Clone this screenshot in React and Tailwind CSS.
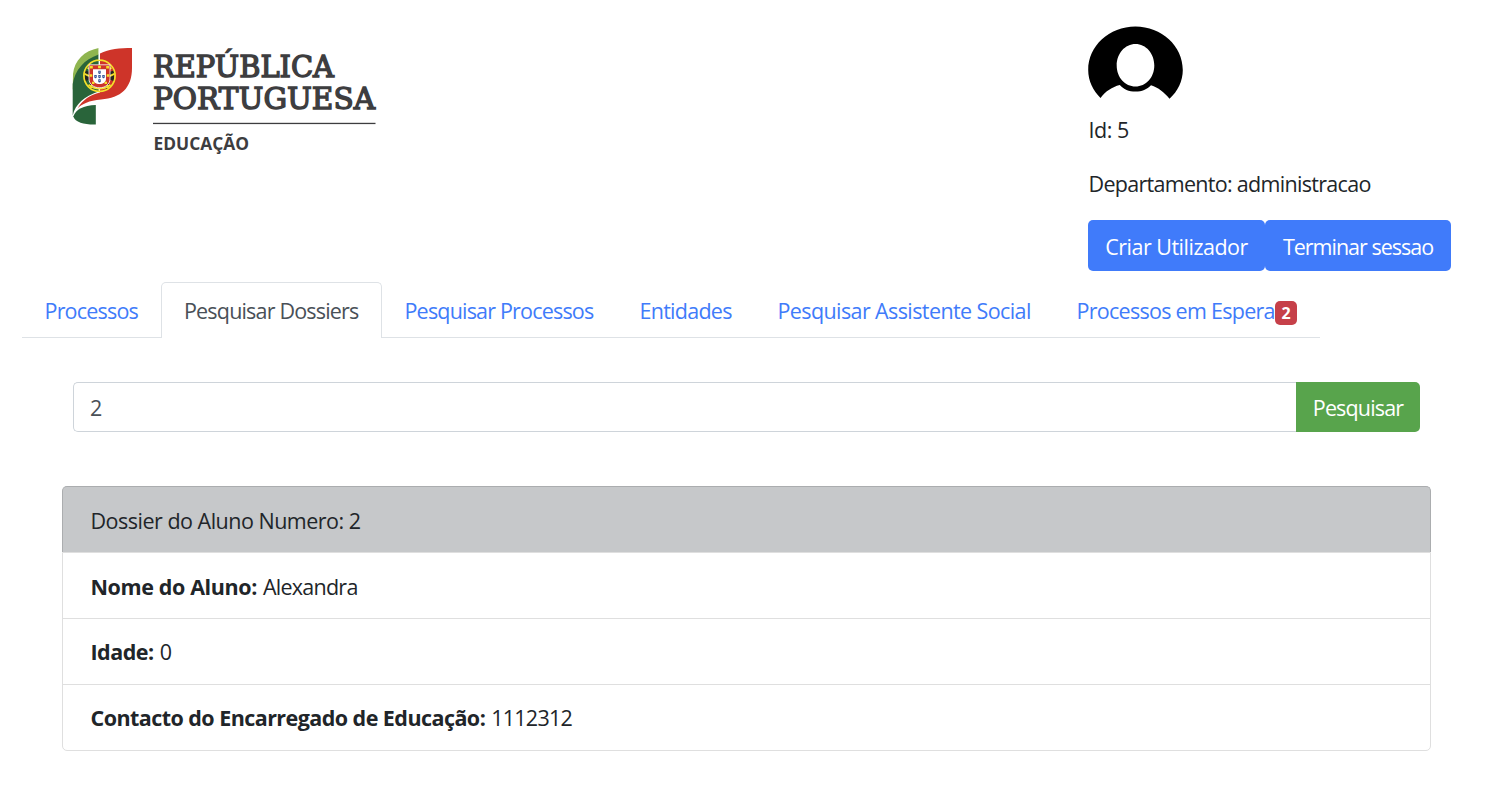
const tabs = [
  { label: 'Processos', box: 'w-[139px]', track: 'tracking-[-0.8px]' },
  { label: 'Pesquisar Dossiers', box: 'w-[221px]', track: 'tracking-[-0.82px]', active: true },
  { label: 'Pesquisar Processos', box: 'w-[235px]', track: 'tracking-[-0.81px]' },
  { label: 'Entidades', box: 'w-[138px]', track: 'tracking-[-0.73px]' },
  { label: 'Pesquisar Assistente Social', box: 'w-[299px]', track: 'tracking-[-0.6px]' },
  { label: 'Processos em Espera', box: 'w-[266px]', track: 'tracking-[-0.72px]', badge: 2 },
];

const rows = [
  { label: 'Nome do Aluno:', value: 'Alexandra', track: 'tracking-[-0.38px]', box: 'h-[66px] pt-[2px]' },
  { label: 'Idade:', value: '0', track: 'tracking-[-0.5px]', box: 'h-[66px]' },
  { label: 'Contacto do Encarregado de Educação:', value: '1112312', track: 'tracking-[-0.55px]', box: 'h-[65px] pt-[1px]' },
];

function Shield({ x, y }) {
  return (
    <g transform={`translate(${x} ${y})`}>
      <path d="M-1.2-1.6h2.4v2a1.2 1.2 0 0 1-2.4 0z" fill="#2d4f96" />
      <circle cy="-.3" r=".45" fill="#fff" />
    </g>
  );
}

function Logo() {
  return (
    <svg width="320" height="120" viewBox="60 40 320 120" role="img" aria-label="República Portuguesa">
      <path d="M98.600 48C84 51 74.500 60 73 74l-.3 16C76 73 84 61 98.600 55z" fill="#8fb550" />
      <path d="M98.600 54.500C84 59.500 75 70 72.700 84v31.500C75.500 104 84 96.500 98.600 91.500z" fill="#29643a" />
      <path d="M100 53.500c9-4.500 20-5.500 32-5.500v20c0 20-11 30-31 31.500-12 1-19 4.500-23.500 9 5.500-9 12.500-13.500 22.500-16z" fill="#ce3429" />
      <path d="M95.800 105v19.500c-11 .3-20.500-2-22.500-8 2.500-7 10-11.200 22.500-11.500z" fill="#29643a" />
      <g transform="translate(99.500 75.800)">
        <path d="M-14.500-5.500l5 2v7l-5 2zM14.500-5.500l-5 2v7l5 2zM-11 10l4-4 4 3-4 4.500zM11 10L7 6 3 9l4 4.500z" fill="#24251f" />
        <circle r="15.600" fill="none" stroke="#f4df2b" strokeWidth="1.700" />
        <path d="M-15-2c8 5 22 5 30 0M-12-8c7 4 17 12 21 20M12-8C5-4-5 4-9 12M-11 9C-5 14 5 14 11 9" fill="none" stroke="#f4df2b" strokeWidth="1.800" />
        <path d="M-10.500-11h21V3C10.500 9 5 12 0 12S-10.500 9-10.500 3z" fill="#ce3429" stroke="#fff" strokeWidth=".8" />
        <path d="M-6.500-6.500h13V3C6.500 6.500 3.500 8.300 0 8.300S-6.500 6.500-6.500 3z" fill="#fff" />
        <Shield x={0} y={-3.500} />
        <Shield x={-4} y={0.8} />
        <Shield x={0} y={0.8} />
        <Shield x={4} y={0.8} />
        <Shield x={0} y={5} />
        <path d="M-9.500-9.800h2.800v2.500h-2.800zM-1.400-10h2.800v2.500h-2.800zM6.700-9.800h2.800v2.500H6.700zM-9.800-1.500h2.600V1h-2.600zM7.200-1.500h2.600V1H7.200zM-7.500 6h2.400v2.300h-2.400zM5.100 6h2.400v2.300H5.100z" fill="#f4df2b" />
      </g>
      <path d="M99.300 47v13" stroke="#fff" strokeWidth="1.200" />
      <g fill="#3d3d3f">
        <g fontFamily="'DejaVu Serif', serif" fontSize="29.500" stroke="#3d3d3f" strokeWidth="1.400">
          <text x="153" y="77" textLength="181" lengthAdjust="spacingAndGlyphs">REPÚBLICA</text>
          <text x="153" y="108.500" textLength="222" lengthAdjust="spacingAndGlyphs">PORTUGUESA</text>
        </g>
        <rect x="153" y="122.800" width="222.500" height="1.300" />
        <text x="153.500" y="150" fontFamily="'Open Sans', sans-serif" fontWeight="700" fontSize="17" textLength="95.500" lengthAdjust="spacingAndGlyphs">EDUCAÇÃO</text>
      </g>
    </svg>
  );
}

function Avatar() {
  return (
    <svg width="96" height="76" viewBox="1088 26 96 76" className="block" aria-hidden="true">
      <path
        fillRule="evenodd"
        d="M1100.500 98C1093 90.500 1088.200 81 1088.200 70c0-24 21-43.500 47.200-43.500S1182.800 46 1182.800 70c0 11-5 21.500-13.300 28.700-5.500-6.700-11-11-18.500-13.500-4 4.200-9 6.300-15.500 6.300s-12-2.300-15.700-6.600c-7.800 2-14 6-19.300 13.100zM1135.500 44c-10.500 0-18.800 9.500-18.800 21.500s8.300 21 18.800 21 18.800-9 18.800-21-8.300-21.500-18.800-21.500z"
      />
    </svg>
  );
}

export default function App() {
  return (
    <div className="h-[797px] w-[1498px] overflow-hidden bg-white font-['Open_Sans','Noto_Sans',sans-serif] text-[21.5px] leading-[34px] text-[#212529]">
      <header className="flex h-[282px] items-start justify-between pl-[60px] pr-[47px]">
        <div className="pt-10">
          <Logo />
        </div>
        <div className="w-[363px] pt-[26px]">
          <Avatar />
          <p className="mt-[11px] pl-[0.5px] tracking-[-0.5px]">Id: 5</p>
          <p className="mt-5 pl-[0.5px] tracking-[-0.7px]">Departamento: administracao</p>
          <div className="mt-[19px] flex text-white">
            <button className="h-[51px] w-[177px] whitespace-nowrap rounded-[5px] bg-[#407bfa] pt-[2px] tracking-[-0.5px]">Criar Utilizador</button>
            <button className="h-[51px] w-[186px] whitespace-nowrap rounded-[5px] bg-[#407bfa] pt-[2px] tracking-[-1px]">Terminar sessao</button>
          </div>
        </div>
      </header>

      <nav className="ml-[22px] flex h-14 w-[1298px]">
        {tabs.map((t) => (
          <a
            key={t.label}
            className={`flex items-center whitespace-nowrap ${t.box} ${t.track} ${
              t.active
                ? 'rounded-t-[5px] border border-b-0 border-[#dee2e6] pl-[22px] text-[#495057]'
                : 'border-b border-[#dee2e6] pl-[22.5px] pt-[2px] text-[#407bfa]'
            }`}
          >
            {t.label}
            {t.badge && (
              <span className="mt-[5px] flex h-6 w-[22px] items-center justify-center rounded-[5px] bg-[#c64049] text-base font-bold text-white">
                {t.badge}
              </span>
            )}
          </a>
        ))}
      </nav>

      <div className="ml-[73px] mt-11 flex h-[50px] w-[1347px]">
        <div className="flex flex-1 items-center rounded-l-[5px] border border-r-0 border-[#ced4da] pl-4 pt-[2px] text-[#495057]">2</div>
        <button className="w-[124px] rounded-r-[5px] bg-[#58a44c] pt-[2px] tracking-[-0.85px] text-white">Pesquisar</button>
      </div>

      <section className="ml-[62px] mt-[54px] w-[1369px]">
        <div className="flex h-[66px] items-center rounded-t-[5px] border border-b-0 border-[#abadaf] bg-[#c6c8ca] pl-[27.5px] pt-[3px] tracking-[-0.5px]">
          Dossier do Aluno Numero: 2
        </div>
        <div className="divide-y divide-[#dfdfdf] rounded-b-[5px] border border-[#dfdfdf]">
          {rows.map((r) => (
            <div key={r.label} className={`flex items-center gap-1.5 pl-[27.5px] ${r.box}`}>
              <strong className={`font-bold ${r.track}`}>{r.label}</strong>
              <span className="tracking-[-0.75px]">{r.value}</span>
            </div>
          ))}
        </div>
      </section>
    </div>
  );
}
